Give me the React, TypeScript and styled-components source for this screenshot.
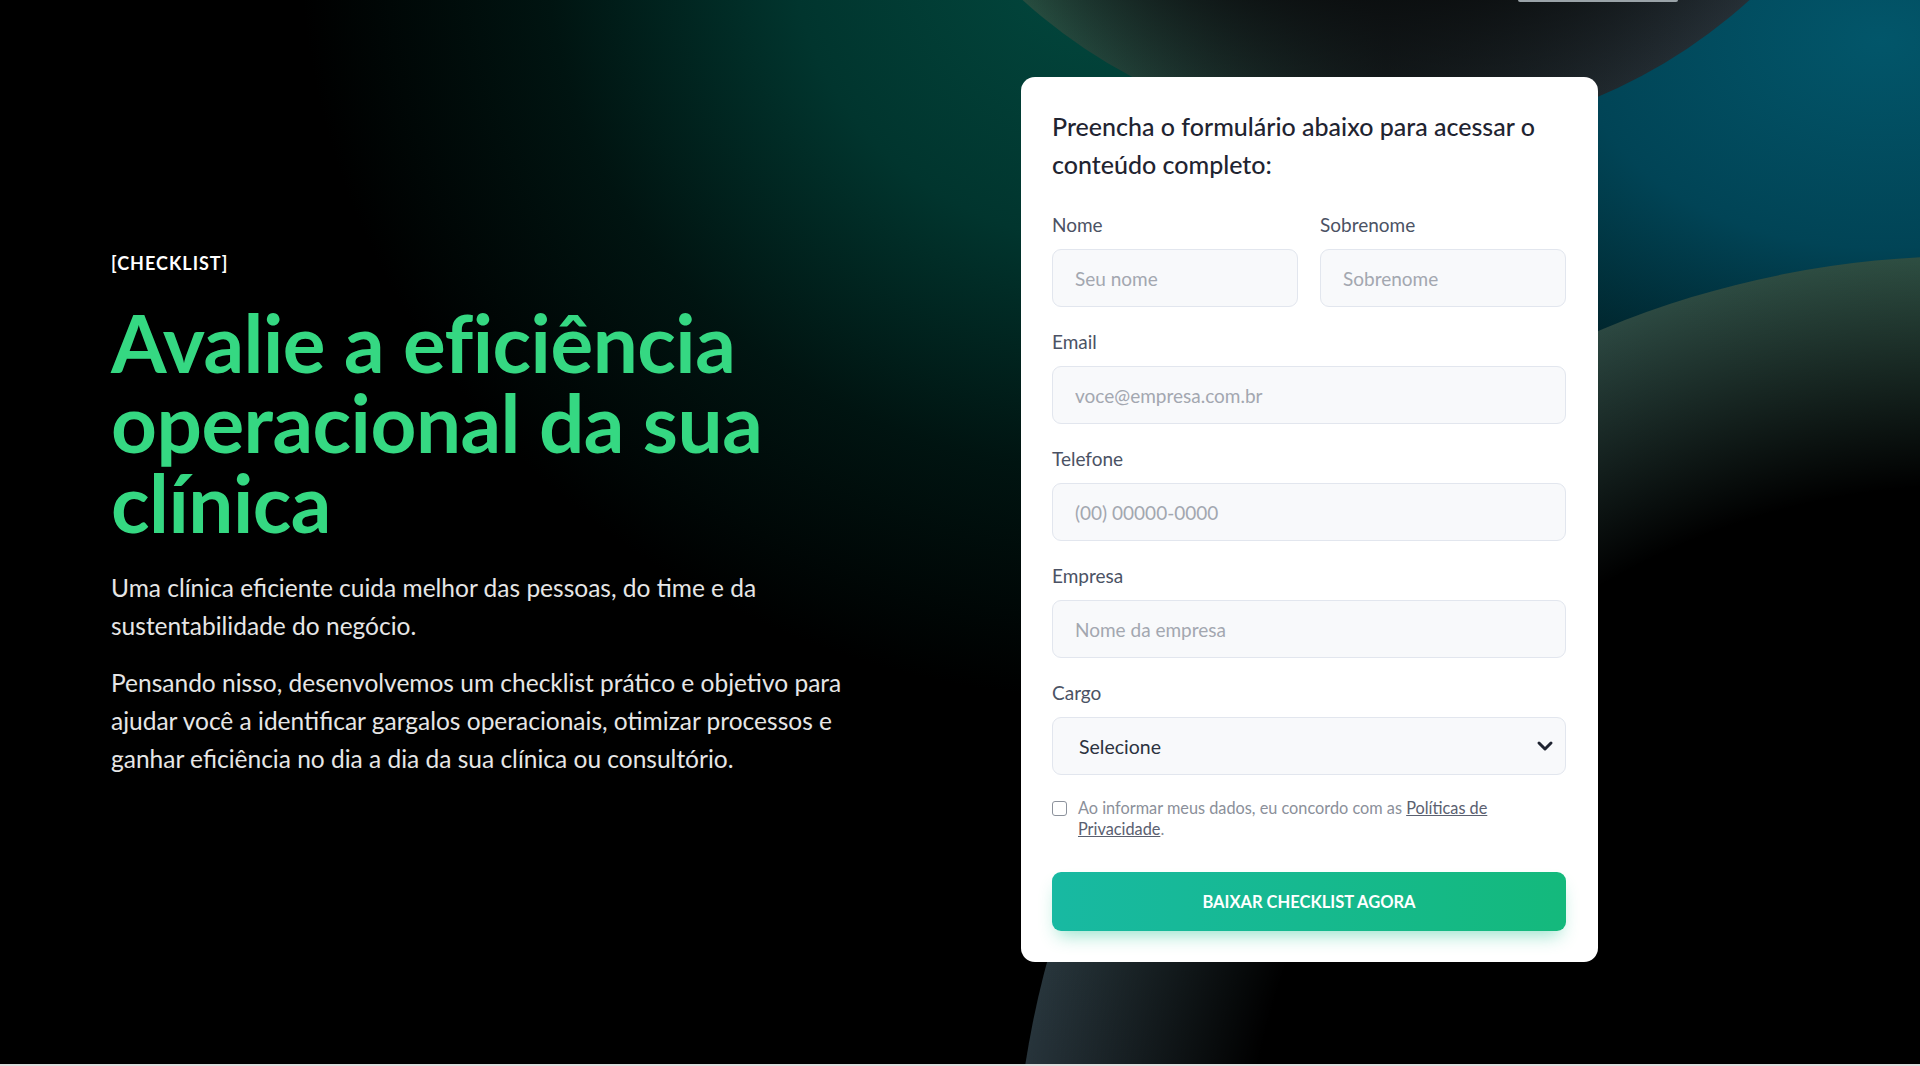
import React from "react";
import styled, { createGlobalStyle } from "styled-components";
import { ChevronDown } from "lucide-react";

const GlobalStyle = createGlobalStyle`
  * { box-sizing: border-box; }
  html, body { margin: 0; padding: 0; background: #000; }
  body {
    font-family: Lato, "Open Sans", "Liberation Sans", sans-serif;
    -webkit-font-smoothing: antialiased;
  }
`;

const Hero = styled.section`
  position: relative;
  height: 1064px;
  overflow: hidden;
  background-color: #000;
  background-image:
    radial-gradient(ellipse 760px 520px at 1880px 40px, #02566a 0%, #014456 40%, rgba(0, 52, 66, 0.55) 70%, transparent 100%),
    radial-gradient(ellipse 820px 760px at 1120px -60px, #024a40 0%, #01352e 40%, rgba(1, 40, 34, 0.5) 70%, transparent 100%);
`;

// decorative spheres in the backdrop
const Orb = styled.div<{ $left: number; $top: number; $size: number; $fill: string }>`
  position: absolute;
  left: ${(p) => p.$left}px;
  top: ${(p) => p.$top}px;
  width: ${(p) => p.$size}px;
  height: ${(p) => p.$size}px;
  border-radius: 50%;
  background: ${(p) => p.$fill};
  pointer-events: none;
`;

const TopEdge = styled.div`
  position: absolute;
  top: 0;
  left: 1518px;
  width: 160px;
  height: 2px;
  background: #9aa3a8;
  border-radius: 0 0 2px 2px;
`;

const Content = styled.div`
  position: relative;
  z-index: 1;
  display: flex;
  align-items: flex-start;
  gap: 130px;
  padding: 77px 0 0 111px;
`;

const Intro = styled.div`
  width: 780px;
  padding-top: 176px;
`;

const Tag = styled.div`
  font-size: 18px;
  line-height: 20px;
  font-weight: 700;
  letter-spacing: 1px;
  color: #fff;
`;

const Title = styled.h1`
  margin: 29px 0 27px;
  max-width: 740px;
  font-size: 80px;
  line-height: 80px;
  font-weight: 700;
  letter-spacing: -0.5px;
  color: #35d882;
`;

const Lead = styled.p`
  margin: 0 0 19px;
  max-width: 750px;
  font-size: 24.5px;
  line-height: 38px;
  font-weight: 400;
  color: #e6e6e6;
`;

const Card = styled.form`
  width: 577px;
  padding: 30px 32px 31px 31px;
  background: #fff;
  border-radius: 14px;
`;

const CardTitle = styled.h2`
  margin: 0 0 31px;
  font-size: 25px;
  line-height: 38px;
  font-weight: 500;
  color: #1f2431;
`;

const Fields = styled.div`
  display: flex;
  flex-direction: column;
  gap: 24px;
`;

const Row = styled.div`
  display: grid;
  grid-template-columns: 1fr 1fr;
  gap: 22px;
`;

const Field = styled.label`
  display: flex;
  flex-direction: column;
  gap: 13px;
`;

const Label = styled.span`
  font-size: 19px;
  line-height: 22px;
  color: #4b5264;
`;

const Input = styled.input`
  height: 58px;
  width: 100%;
  padding: 0 22px;
  border: 1px solid #e2e6ee;
  border-radius: 9px;
  background: #f8f9fb;
  font: inherit;
  font-size: 19px;
  color: #2c3240;
  outline: none;

  &::placeholder {
    color: #a3a7b0;
  }
`;

const SelectWrap = styled.div`
  position: relative;

  svg {
    position: absolute;
    right: 9px;
    top: 50%;
    transform: translateY(-50%);
    color: #1f2431;
    pointer-events: none;
  }
`;

const Select = styled.select`
  appearance: none;
  height: 58px;
  width: 100%;
  padding: 0 26px;
  border: 1px solid #e2e6ee;
  border-radius: 9px;
  background: #f8f9fb;
  font: inherit;
  font-size: 19.5px;
  color: #2c3240;
  outline: none;
`;

const Consent = styled.label`
  display: flex;
  align-items: flex-start;
  gap: 11px;
  margin-top: 22px;
  font-size: 16.3px;
  line-height: 21px;
  color: #8b909a;

  a {
    color: #5a6070;
    text-decoration: underline;
  }
`;

const Check = styled.input`
  appearance: none;
  flex: none;
  width: 15px;
  height: 15px;
  margin: 4px 0 0;
  border: 1.5px solid #8c929c;
  border-radius: 3px;
  background: #fff;
`;

const Submit = styled.button`
  width: 100%;
  height: 59px;
  margin-top: 33px;
  border: none;
  border-radius: 9px;
  background: linear-gradient(90deg, #18b9a2 0%, #14b97c 100%);
  box-shadow: 0 10px 18px -6px rgba(22, 190, 140, 0.45);
  font: inherit;
  font-size: 16.5px;
  font-weight: 700;
  color: #fff;
  cursor: pointer;
`;

const NextSection = styled.div`
  height: 200px;
  background: #dcdcdc;
`;

const topOrb =
  "radial-gradient(closest-side, #0b0e0f 0 72%, rgba(11,14,15,0) 100%), linear-gradient(90deg, #36684f 0%, #22443a 22%, #161d1f 50%, #222b31 75%, #2d3840 100%)";
const lowOrb =
  "radial-gradient(closest-side, #000 0 76%, rgba(0,0,0,0) 100%), linear-gradient(225deg, #2e4f42 25%, #2a4240 45%, #27343b 70%, #222a30 100%)";

export default function App() {
  return (
    <>
      <GlobalStyle />
      <Hero>
        <Orb $left={844} $top={-944} $size={1084} $fill={topOrb} />
        <Orb $left={1014} $top={256} $size={1910} $fill={lowOrb} />
        <TopEdge />
        <Content>
          <Intro>
            <Tag>[CHECKLIST]</Tag>
            <Title>Avalie a eficiência operacional da sua clínica</Title>
            <Lead>Uma clínica eficiente cuida melhor das pessoas, do time e da sustentabilidade do negócio.</Lead>
            <Lead>
              Pensando nisso, desenvolvemos um checklist prático e objetivo para ajudar você a identificar gargalos
              operacionais, otimizar processos e ganhar eficiência no dia a dia da sua clínica ou consultório.
            </Lead>
          </Intro>
          <Card onSubmit={(e) => e.preventDefault()}>
            <CardTitle>Preencha o formulário abaixo para acessar o conteúdo completo:</CardTitle>
            <Fields>
              <Row>
                <Field>
                  <Label>Nome</Label>
                  <Input placeholder="Seu nome" />
                </Field>
                <Field>
                  <Label>Sobrenome</Label>
                  <Input placeholder="Sobrenome" />
                </Field>
              </Row>
              <Field>
                <Label>Email</Label>
                <Input type="email" placeholder="voce@empresa.com.br" />
              </Field>
              <Field>
                <Label>Telefone</Label>
                <Input placeholder="(00) 00000-0000" />
              </Field>
              <Field>
                <Label>Empresa</Label>
                <Input placeholder="Nome da empresa" />
              </Field>
              <Field>
                <Label>Cargo</Label>
                <SelectWrap>
                  <Select defaultValue="">
                    <option value="">Selecione</option>
                  </Select>
                  <ChevronDown size={24} strokeWidth={3} />
                </SelectWrap>
              </Field>
            </Fields>
            <Consent>
              <Check type="checkbox" />
              <span>
                Ao informar meus dados, eu concordo com as <a href="#privacidade">Políticas de</a>{" "}
                <a href="#privacidade">Privacidade</a>.
              </span>
            </Consent>
            <Submit type="submit">BAIXAR CHECKLIST AGORA</Submit>
          </Card>
        </Content>
      </Hero>
      <NextSection />
    </>
  );
}
